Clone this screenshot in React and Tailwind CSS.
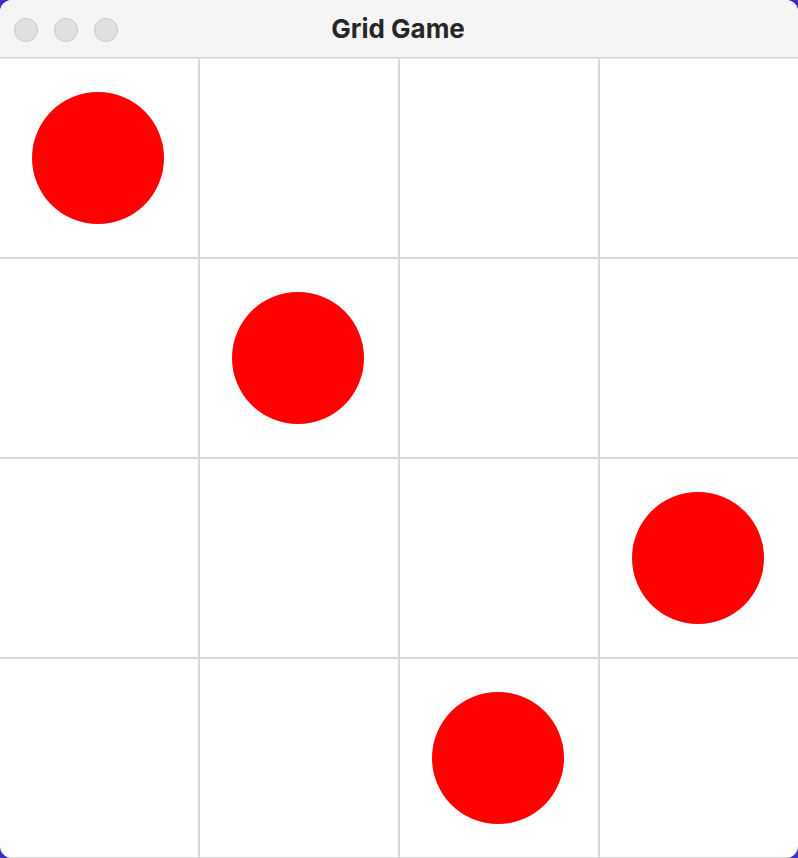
import React from 'react';

const pieces = [[0, 0], [1, 1], [2, 3], [3, 2]];

function Cell({ filled }) {
    return (
        <div className="w-[200px] h-[200px] border-r-2 border-b-2 border-[#d6d6d6] flex items-center justify-center">
            {filled && <div className="w-[132px] h-[132px] rounded-full bg-[#ff0000] -translate-x-px" />}
        </div>
    );
}

export default function App() {
    const cells = [];
    for (let r = 0; r < 4; r++) {
        for (let c = 0; c < 4; c++) {
            const filled = pieces.some(([pr, pc]) => pr === r && pc === c);
            cells.push(<Cell key={`${r}-${c}`} filled={filled} />);
        }
    }

    return (
        <div className="w-[798px] h-[858px] bg-[#3b2fc9]">
            <div className="w-[798px] h-[858px] rounded-[12px] overflow-hidden bg-white flex flex-col">
                <div className="h-[58px] shrink-0 bg-[#f5f5f5] border-b border-[#d2d2d2] relative flex items-center justify-center">
                    <div className="absolute left-[14px] top-[18px] flex gap-[16px]">
                        <span className="w-[24px] h-[24px] rounded-full bg-[#e0e0e0] border border-[#c9c9c9]" />
                        <span className="w-[24px] h-[24px] rounded-full bg-[#e0e0e0] border border-[#c9c9c9]" />
                        <span className="w-[24px] h-[24px] rounded-full bg-[#e0e0e0] border border-[#c9c9c9]" />
                    </div>
                    <span className="text-[26px] leading-none font-bold text-[#262626] font-['Inter',sans-serif] -translate-x-px">Grid Game</span>
                </div>
                <div className="border-t border-[#e6e6e6] grid grid-cols-[repeat(4,200px)]">
                    {cells}
                </div>
            </div>
        </div>
    );
}
